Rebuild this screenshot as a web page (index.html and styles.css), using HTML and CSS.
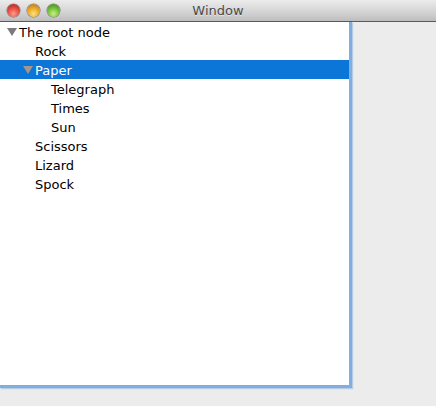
FILE: index.html
```html
<!DOCTYPE html>
<html>
<head>
<meta charset="utf-8">
<link rel="stylesheet" href="styles.css">
</head>
<body>
<div class="window">
  <div class="titlebar">
    <div class="lights">
      <span class="light red"></span>
      <span class="light yellow"></span>
      <span class="light green"></span>
    </div>
    <div class="title">Window</div>
  </div>
  <div class="content">
    <div class="tree">
      <div class="row lvl0"><span class="tri"></span><span class="label">The root node</span></div>
      <div class="row lvl1"><span class="label">Rock</span></div>
      <div class="row lvl1 selected"><span class="tri"></span><span class="label">Paper</span></div>
      <div class="row lvl2"><span class="label">Telegraph</span></div>
      <div class="row lvl2"><span class="label">Times</span></div>
      <div class="row lvl2"><span class="label">Sun</span></div>
      <div class="row lvl1"><span class="label">Scissors</span></div>
      <div class="row lvl1"><span class="label">Lizard</span></div>
      <div class="row lvl1"><span class="label">Spock</span></div>
    </div>
  </div>
</div>
</body>
</html>
```
FILE: styles.css
```css
html, body {
  margin: 0;
  padding: 0;
}
body {
  width: 436px;
  height: 406px;
  background: #ececec;
  font-family: "DejaVu Sans", "Liberation Sans", sans-serif;
  font-size: 13px;
  color: #000;
  overflow: hidden;
}
.window {
  display: flex;
  flex-direction: column;
  height: 406px;
}
.titlebar {
  height: 21px;
  border-bottom: 1px solid #5a5a5a;
  background: linear-gradient(#ececec, #d2d2d2 60%, #bdbdbd);
  display: flex;
  align-items: center;
  position: relative;
}
.lights {
  display: flex;
  gap: 7px;
  padding-left: 7px;
}
.light {
  width: 13px;
  height: 13px;
  border-radius: 50%;
  box-shadow: 0 0 0 0.5px rgba(0,0,0,0.45);
}
.red { background: radial-gradient(circle at 50% 75%, #ff9a8a, #e0443a 55%, #a11a14); }
.yellow { background: radial-gradient(circle at 50% 75%, #ffe27a, #e5a023 55%, #a86a0c); }
.green { background: radial-gradient(circle at 50% 75%, #c8f27e, #6cb734 55%, #3a7a13); }
.title {
  position: absolute;
  left: 0;
  right: 0;
  top: 3px;
  text-align: center;
  color: #4a4a4a;
  font-size: 13px;
  text-shadow: 0 1px 0 rgba(255,255,255,0.5);
}
.content {
  display: flex;
}
.tree {
  width: 349px;
  height: 363px;
  background: #fff;
  border-right: 3px solid #82ade0;
  border-bottom: 3px solid #82ade0;
  box-shadow: 1px 1px 1px rgba(130,173,224,0.5);
}
.row {
  height: 19px;
  display: flex;
  align-items: center;
  white-space: nowrap;
}
.row.lvl0 { padding-left: 19px; }
.row.lvl1 { padding-left: 35px; }
.row.lvl2 { padding-left: 51px; }
.row .tri {
  width: 0;
  height: 0;
  border-left: 5px solid transparent;
  border-right: 5px solid transparent;
  border-top: 8px solid #7b7b7b;
  margin-left: -12px;
  margin-right: 2px;
  margin-top: 1px;
}
.label {
  line-height: 19px;
  padding-top: 2px;
}
.selected {
  background: #0b76d7;
  color: #fff;
}
.selected .tri {
  border-top-color: #a1978c;
}
```
